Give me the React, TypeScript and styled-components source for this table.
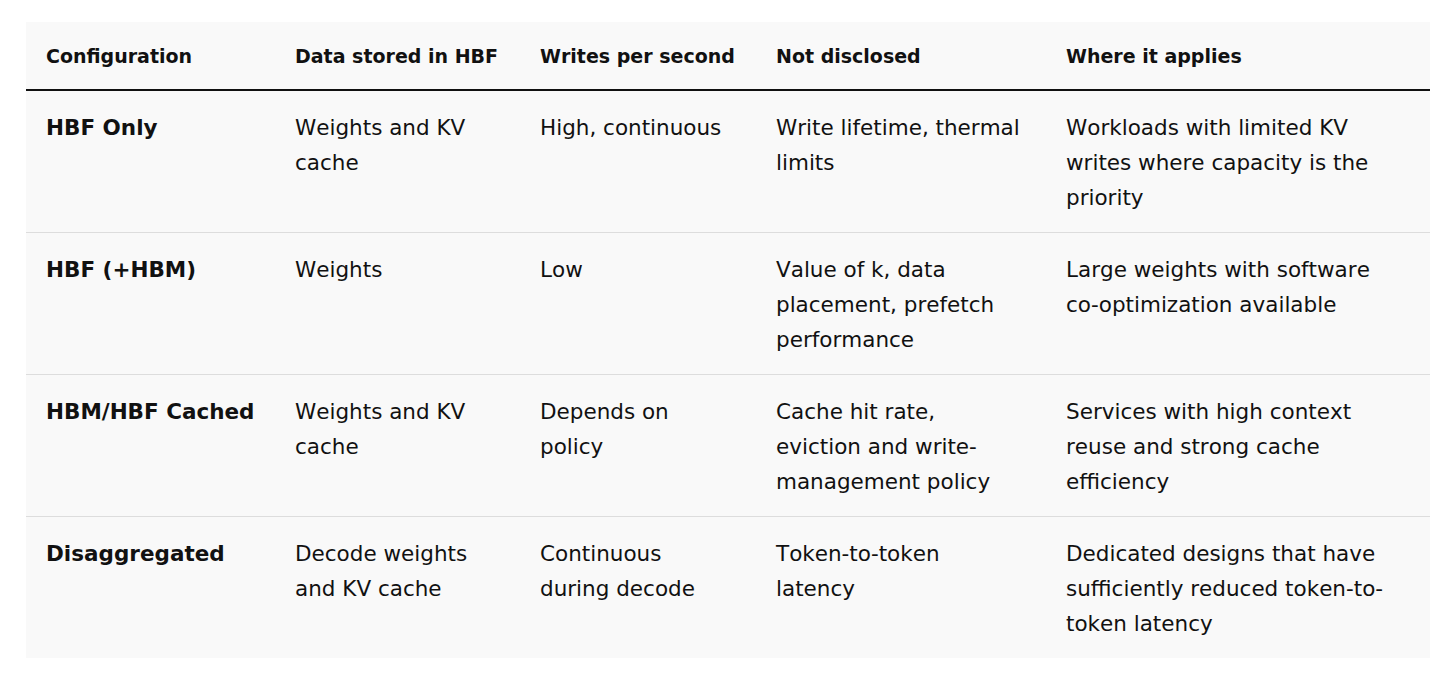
import React from 'react';
import styled, { createGlobalStyle } from 'styled-components';

const GlobalStyle = createGlobalStyle`
  html, body {
    margin: 0;
    padding: 0;
    background: #ffffff;
  }
  body {
    font-family: 'DejaVu Sans', 'Liberation Sans', sans-serif;
    font-kerning: none;
    color: #111111;
  }
`;

const Page = styled.div`
  padding: 22px 26px;
`;

const Table = styled.table`
  width: 100%;
  border-collapse: collapse;
  table-layout: fixed;
  background: #f9f9f9;
`;

const HeadCell = styled.th`
  text-align: left;
  font-size: 19px;
  font-weight: bold;
  padding: 22px 4px 21px 20px;
  line-height: 24px;
  white-space: nowrap;
  border-bottom: 2px solid #111111;
`;

const Row = styled.tr`
  & + & > td {
    border-top: 1px solid #dddddd;
  }
`;

const Cell = styled.td<{ $strong?: boolean; $padRight: number }>`
  vertical-align: top;
  font-size: 21.5px;
  line-height: 35px;
  padding: 19px ${(p) => p.$padRight}px 17px 20px;
  font-weight: ${(p) => (p.$strong ? 'bold' : 'normal')};
`;

const columns = [
  { title: 'Configuration', width: 249, padRight: 12 },
  { title: 'Data stored in HBF', width: 245, padRight: 20 },
  { title: 'Writes per second', width: 236, padRight: 26 },
  { title: 'Not disclosed', width: 290, padRight: 24 },
  { title: 'Where it applies', width: 384, padRight: 34 },
];

const rows = [
  ['HBF Only', 'Weights and KV cache', 'High, continuous', 'Write lifetime, thermal limits', 'Workloads with limited KV writes where capacity is the priority'],
  ['HBF (+HBM)', 'Weights', 'Low', 'Value of k, data placement, prefetch performance', 'Large weights with software co-optimization available'],
  ['HBM/HBF Cached', 'Weights and KV cache', 'Depends on policy', 'Cache hit rate, eviction and write-management policy', 'Services with high context reuse and strong cache efficiency'],
  ['Disaggregated', 'Decode weights and KV cache', 'Continuous during decode', 'Token-to-token latency', 'Dedicated designs that have sufficiently reduced token-to-token latency'],
];

const App = () => {
  return (
    <Page>
      <GlobalStyle />
      <Table>
        <colgroup>
          {columns.map((c) => (
            <col key={c.title} style={{ width: c.width }} />
          ))}
        </colgroup>
        <thead>
          <tr>
            {columns.map((c) => (
              <HeadCell key={c.title}>{c.title}</HeadCell>
            ))}
          </tr>
        </thead>
        <tbody>
          {rows.map((r) => (
            <Row key={r[0]}>
              {r.map((text, i) => (
                <Cell key={i} $strong={i === 0} $padRight={columns[i].padRight}>
                  {text}
                </Cell>
              ))}
            </Row>
          ))}
        </tbody>
      </Table>
    </Page>
  );
};

export default App;
